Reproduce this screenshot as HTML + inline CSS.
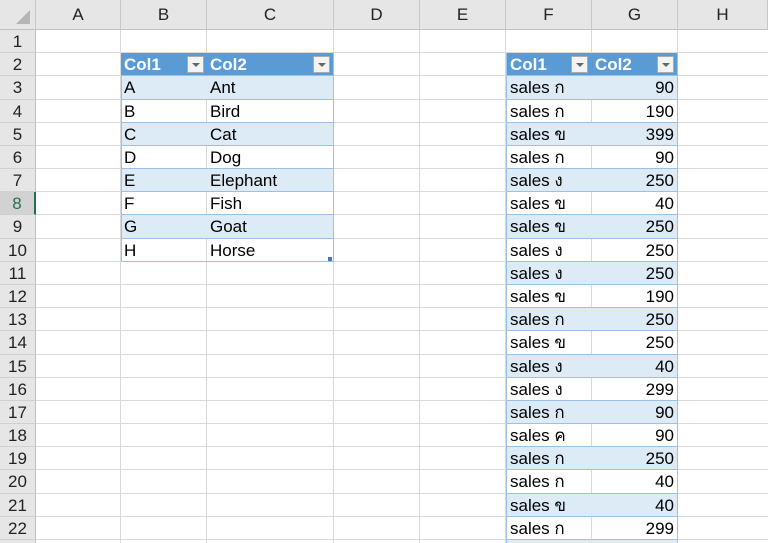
<!DOCTYPE html><html style="width:768px;height:543px;overflow:hidden"><head><style>
*{margin:0;padding:0;box-sizing:border-box}
body{width:768px;height:543px;overflow:hidden;background:#fff;font-family:"Liberation Sans","Noto Sans CJK SC",sans-serif;position:relative}
.a{position:absolute}
.ch{top:0;height:30px;background:#e6e6e6;border-right:1px solid #c8c8c8;border-bottom:1px solid #c0c0c0;text-align:center;font-size:17px;line-height:30px;color:#222}
.rh{left:0;width:36px;background:#e6e6e6;border-right:1px solid #c0c0c0;border-bottom:1px solid #d0d0d0;text-align:center;font-size:17px;color:#222}
.vl{top:30px;bottom:0;width:1px;background:#d9d9d9}
.hl{left:36px;right:0;height:1px;background:#d9d9d9}
.c{font-size:17px;padding-left:3px;white-space:nowrap;color:#000}
.h{background:#5b9bd5;color:#fff;font-weight:bold}
.b{background:#ddebf7}
.dd{position:absolute;top:3px;width:17px;height:17px;background:#f4f4f4;border:1px solid #ababab}
.dd:after{content:"";position:absolute;left:4px;top:6px;border-left:4px solid transparent;border-right:4px solid transparent;border-top:4px solid #666}
</style></head><body>
<div class="a ch" style="left:0;width:36px"><svg width="36" height="30"><polygon points="30,10 30,24 16,24" fill="#b5b5b5"/></svg></div>
<div class="a ch" style="left:36px;width:85px">A</div>
<div class="a ch" style="left:121px;width:86px">B</div>
<div class="a ch" style="left:207px;width:127px">C</div>
<div class="a ch" style="left:334px;width:86px">D</div>
<div class="a ch" style="left:420px;width:86px">E</div>
<div class="a ch" style="left:506px;width:86px">F</div>
<div class="a ch" style="left:592px;width:86px">G</div>
<div class="a ch" style="left:678px;width:90px">H</div>
<div id="g"></div>
<script>
var T=30,H=23.18,s='';
var L=[121,207,334,420,506,592,678];
L.forEach(function(x){s+='<div class="a vl" style="left:'+(x-1)+'px"></div>'});
var t1=[['Col1','Col2'],['A','Ant'],['B','Bird'],['C','Cat'],['D','Dog'],['E','Elephant'],['F','Fish'],['G','Goat'],['H','Horse']];
var t2=[['ก',90],['ก',190],['ข',399],['ก',90],['ง',250],['ข',40],['ข',250],['ง',250],['ง',250],['ข',190],['ก',250],['ข',250],['ง',40],['ง',299],['ก',90],['ค',90],['ก',250],['ก',40],['ข',40],['ก',299],['ก',90]];
for(var i=1;i<=23;i++){
 var y=T+H*(i-1);
 s+='<div class="a hl" style="top:'+(y+H-1).toFixed(2)+'px"></div>';
 s+='<div class="a rh" style="top:'+y.toFixed(2)+'px;height:'+H+'px;line-height:'+H+'px;'+(i==8?'color:#217346;background:#d2d2d2;border-right:2px solid #217346':'')+'">'+i+'</div>';
 var k=i-2;
 if(k>=0&&k<t1.length){
  var cl=k==0?'h':(k%2==1?'b':'');
  s+='<div class="a c '+cl+'" style="left:121px;width:86px;top:'+y.toFixed(2)+'px;height:'+H+'px;line-height:'+H+'px;border-bottom:1px solid #9bc2e6">'+t1[k][0]+(k==0?'<span class="dd" style="left:66px"></span>':'')+'</div>';
  s+='<div class="a c '+cl+'" style="left:207px;width:127px;top:'+y.toFixed(2)+'px;height:'+H+'px;line-height:'+H+'px;border-bottom:1px solid #9bc2e6;border-right:1px solid #9bc2e6">'+t1[k][1]+(k==0?'<span class="dd" style="left:106px"></span>':'')+'</div>';
 }
 if(k>=0&&k<=t2.length){
  var cl=k==0?'h':(k%2==1?'b':'');
  var a=k==0?'Col1':'sales '+t2[k-1][0], b=k==0?'Col2':t2[k-1][1];
  s+='<div class="a c '+cl+'" style="left:506px;width:86px;top:'+y.toFixed(2)+'px;height:'+H+'px;line-height:'+H+'px;border-bottom:1px solid #9bc2e6;border-left:1px solid #9bc2e6">'+a+(k==0?'<span class="dd" style="left:64px"></span>':'')+'</div>';
  s+='<div class="a c '+cl+'" style="left:592px;width:86px;top:'+y.toFixed(2)+'px;height:'+H+'px;line-height:'+H+'px;border-bottom:1px solid #9bc2e6;border-right:1px solid #9bc2e6;'+(k?'text-align:right;padding-right:3px':'')+'">'+b+(k==0?'<span class="dd" style="left:65px"></span>':'')+'</div>';
 }
}
s+='<div class="a" style="left:328px;top:'+(T+H*10-5).toFixed(1)+'px;width:4px;height:4px;background:#4472c4"></div>';
s+='<div class="a" style="left:121px;top:'+(T+H*2)+'px;width:1px;height:'+(H*8)+'px;background:#9bc2e6"></div>';
document.getElementById('g').innerHTML=s;
</script>
</body></html>
